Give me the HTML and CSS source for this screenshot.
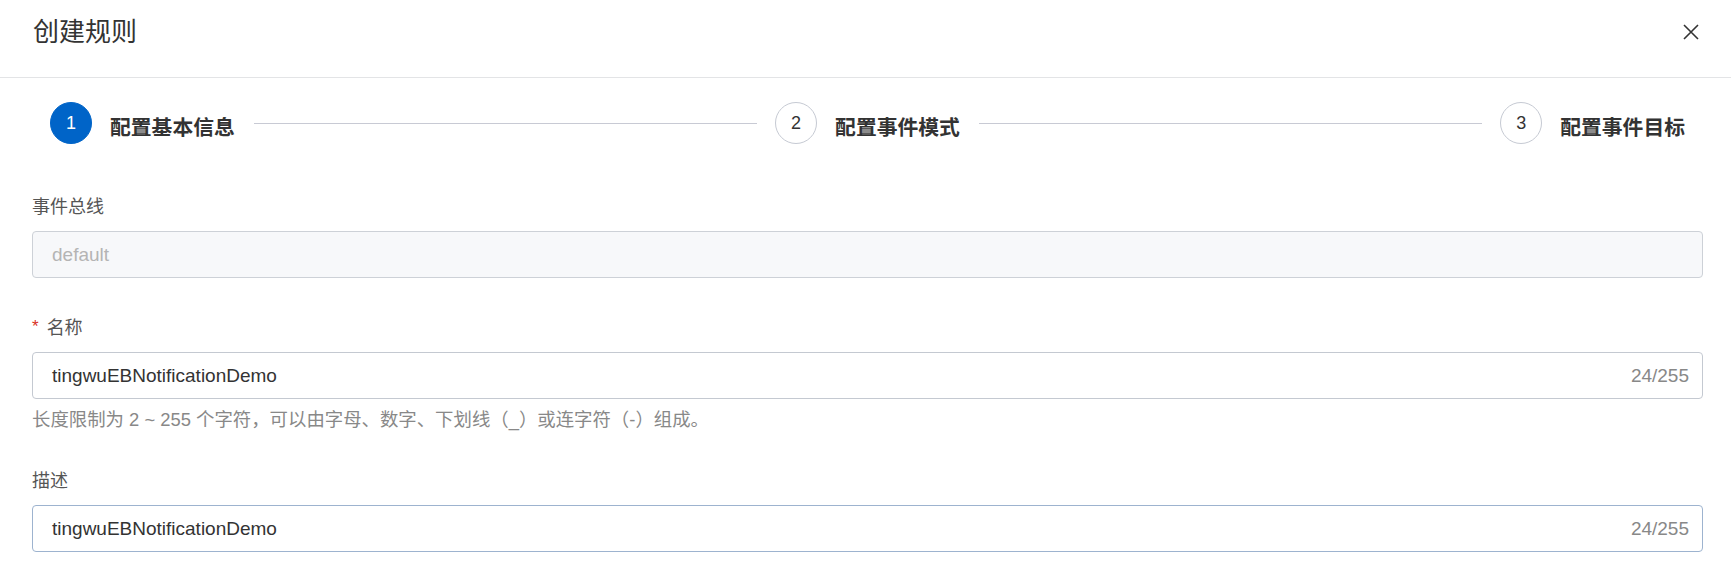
FILE: index.html
```html
<!DOCTYPE html>
<html lang="zh-CN">
<head>
<meta charset="utf-8">
<title>创建规则</title>
<link rel="stylesheet" href="styles.css">
</head>
<body>
<div class="dialog">
  <div class="header">
    <div class="title">创建规则</div>
    <div class="close">
      <svg width="16" height="16" viewBox="0 0 16 16"><path d="M1 1L15 15M15 1L1 15" stroke="#333" stroke-width="1.6" fill="none"/></svg>
    </div>
  </div>

  <div class="steps">
    <div class="step-circle active">1</div>
    <div class="step-title">配置基本信息</div>
    <div class="step-line"></div>
    <div class="step-circle">2</div>
    <div class="step-title">配置事件模式</div>
    <div class="step-line"></div>
    <div class="step-circle">3</div>
    <div class="step-title">配置事件目标</div>
  </div>

  <div class="form">
    <div class="field">
      <div class="label">事件总线</div>
      <div class="input disabled"><span class="value">default</span></div>
    </div>
    <div class="field with-hint">
      <div class="label"><span class="req">*</span>名称</div>
      <div class="input"><span class="value">tingwuEBNotificationDemo</span><span class="count">24/255</span></div>
      <div class="hint">长度限制为 2 ~ 255 个字符，可以由字母、数字、下划线（_）或连字符（-）组成。</div>
    </div>
    <div class="field">
      <div class="label">描述</div>
      <div class="input hover"><span class="value">tingwuEBNotificationDemo</span><span class="count">24/255</span></div>
    </div>
  </div>
</div>
</body>
</html>
```

FILE: styles.css
```css
* { box-sizing: border-box; }
html, body { margin: 0; padding: 0; background: #fff; }
body {
  font-family: "Liberation Sans", "Noto Sans CJK SC", sans-serif;
  color: #333;
}
.dialog { width: 1731px; }

.header {
  display: flex;
  justify-content: space-between;
  align-items: flex-start;
  padding: 14px 32px 27px 33px;
  border-bottom: 1px solid #e3e4e6;
}
.title {
  font-size: 26px;
  line-height: 36px;
  color: #333;
}
.close {
  height: 36px;
  display: flex;
  align-items: center;
}
.close svg { display: block; }

.steps {
  display: flex;
  align-items: center;
  padding: 24px 46px 0 50px;
}
.step-circle {
  flex: none;
  width: 42px;
  height: 42px;
  border-radius: 50%;
  border: 1px solid #c6cad3;
  display: flex;
  align-items: center;
  justify-content: center;
  font-size: 18px;
  color: #333;
  background: #fff;
}
.step-circle.active {
  background: #0064c8;
  border-color: #0064c8;
  color: #fff;
}
.step-title {
  flex: none;
  margin-left: 18px;
  font-size: 20.8px;
  line-height: 28px;
  font-weight: 700;
  color: #333;
  padding-top: 10px;
}
.step-line {
  flex: 1;
  height: 1px;
  background: #c8cad4;
  margin: 0 18px 0 19px;
}

.form {
  padding: 51px 28px 0 32px;
}
.field { margin-bottom: 38px; }
.field.with-hint { margin-bottom: 37px; }
.label {
  font-size: 18px;
  line-height: 24px;
  margin-bottom: 12px;
  color: #555;
  display: flex;
  align-items: center;
}
.req {
  color: #d93026;
  font-size: 17px;
  margin-right: 8px;
  margin-top: -2px;
}
.input {
  height: 47px;
  border: 1px solid #c4c9d1;
  border-radius: 4px;
  display: flex;
  align-items: center;
  justify-content: space-between;
  padding: 0 13px 0 19px;
  font-size: 19px;
  background: #fff;
}
.input.disabled {
  background: #f7f8fa;
  border-color: #cdd1d7;
}
.input.disabled .value { color: #b4b4b4; }
.input.hover { border-color: #9db3cf; }
.value { color: #333; }
.count { color: #888; }
.hint {
  margin-top: 9px;
  font-size: 18.4px;
  line-height: 24px;
  color: #888;
}
```
